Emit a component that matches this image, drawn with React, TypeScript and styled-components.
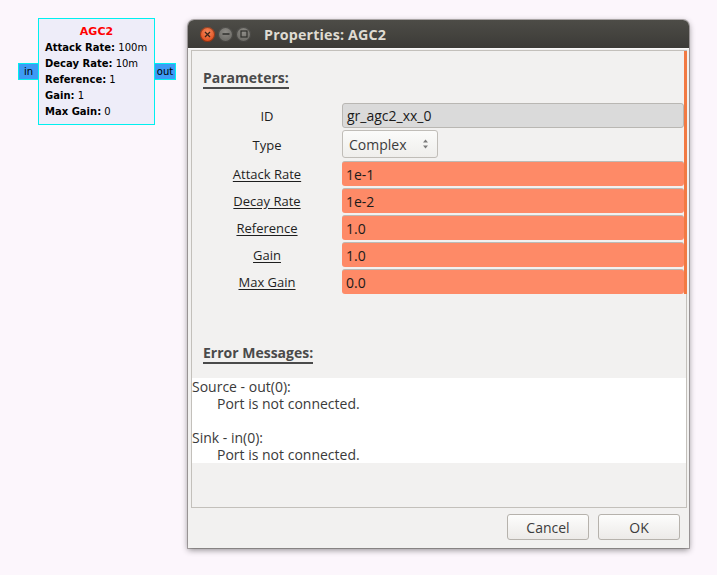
import React from "react";
import styled, { createGlobalStyle } from "styled-components";

const Global = createGlobalStyle`
  html, body { margin: 0; padding: 0; background: #fcf6fc; }
  body { width: 717px; height: 575px; overflow: hidden; }
`;

const UI = `"Open Sans", "Noto Sans", "DejaVu Sans", sans-serif`;

const Canvas = styled.div`
  position: relative;
  width: 717px;
  height: 575px;
  background: #fcf6fc;
`;

const Block = styled.div`
  position: absolute;
  left: 38px;
  top: 18px;
  width: 117px;
  height: 107px;
  box-sizing: border-box;
  border: 1px solid #00f0f0;
  background: #eeedf9;
  font-family: "DejaVu Sans", sans-serif;
  font-size: 10px;
  color: #000;
  padding: 5px 0 0 6px;
  display: flex;
  flex-direction: column;
`;

const BlockTitle = styled.div`
  color: #ff0000;
  font-weight: bold;
  font-size: 11px;
  text-align: center;
  margin-left: -6px;
  height: 16px;
  line-height: 16px;
`;

const BlockLine = styled.div`
  height: 16px;
  line-height: 16px;
  white-space: nowrap;
  b { font-weight: bold; }
`;

const Port = styled.div<{ $side: "left" | "right" }>`
  position: absolute;
  top: 44px;
  ${(p) => (p.$side === "left" ? "left: -21px; width: 19px;" : "right: -22px; width: 20px;")}
  height: 15px;
  border: 1px solid #00f0f0;
  background: #3d9bf5;
  font-family: "DejaVu Sans", sans-serif;
  font-size: 10px;
  line-height: 15px;
  text-align: center;
  color: #000;
`;

const Window = styled.div`
  position: absolute;
  left: 188px;
  top: 20px;
  width: 501px;
  height: 528px;
  border-radius: 6px 6px 0 0;
  box-shadow: 0 0 0 1px rgba(60, 55, 50, 0.35), 0 2px 6px rgba(0, 0, 0, 0.45);
  display: flex;
  flex-direction: column;
  background: #f2f1f0;
  overflow: hidden;
`;

const TitleBar = styled.div`
  height: 28px;
  background: linear-gradient(#4d4c47, #3c3b37);
  display: flex;
  align-items: center;
  padding-left: 12px;
  gap: 3px;
  flex-shrink: 0;
`;

const WinButton = styled.div<{ $kind: "close" | "min" | "max" }>`
  width: 15px;
  height: 15px;
  border-radius: 50%;
  display: flex;
  align-items: center;
  justify-content: center;
  box-shadow: inset 0 0 0 1px rgba(0, 0, 0, 0.35);
  background: ${(p) =>
    p.$kind === "close"
      ? "radial-gradient(circle at 50% 35%, #f58a5e, #e0501f 70%, #c2441b)"
      : "radial-gradient(circle at 50% 35%, #8e8c87, #6c6b66 70%, #5c5b57)"};
`;

const TitleText = styled.div`
  margin-left: 10px;
  margin-top: 1px;
  color: #dfdbd2;
  font-family: ${UI};
  font-weight: bold;
  font-size: 14.3px;
  letter-spacing: 0.15px;
`;

const Body = styled.div`
  flex: 1;
  display: flex;
  flex-direction: column;
  padding: 1px 2px 0 3px;
  border-top: 1px solid #faf9f8;
`;

const Frame = styled.div`
  position: relative;
  height: 458px;
  box-sizing: border-box;
  border: 1px solid #c3c0bb;
  display: flex;
  flex-direction: column;
  font-family: ${UI};
  color: #3c3c3c;
`;

const ScrollIndicator = styled.div`
  position: absolute;
  right: -1px;
  top: 0;
  width: 3px;
  height: 243px;
  background: #f27a43;
`;

const SectionHeader = styled.div<{ $top: number }>`
  margin: ${(p) => p.$top}px 0 0 11px;
  span {
    display: inline-block;
    font-weight: bold;
    font-size: 14px;
    line-height: 16px;
    color: #4a4a4a;
    border-bottom: 2px solid #4a4a4a;
    padding-bottom: 1px;
  }
`;

const ParamGrid = styled.div`
  margin-top: 14px;
  display: grid;
  grid-template-columns: 150px 1fr;
  grid-template-rows: 25px 29px;
  grid-auto-rows: 25px;
  row-gap: 2px;
  padding-right: 2px;
`;

const Label = styled.div<{ $ul?: boolean }>`
  display: flex;
  align-items: center;
  justify-content: center;
  font-size: 13px;
  color: #1e1e1e;
  text-decoration: ${(p) => (p.$ul ? "underline" : "none")};
  text-underline-offset: 2px;
`;

const Entry = styled.div<{ $kind: "id" | "err" }>`
  display: flex;
  align-items: center;
  padding-left: 4px;
  font-size: 14px;
  color: #1a1a1a;
  border-radius: 3px;
  ${(p) =>
    p.$kind === "id"
      ? "background: #dadada; border: 1px solid #b9b7b3;"
      : "background: #fe8a67; border-top: 1px solid #bdbab5;"}
`;

const ComboCell = styled.div`
  display: flex;
  align-items: flex-start;
`;

const Combo = styled.div`
  width: 96px;
  height: 28px;
  box-sizing: border-box;
  border: 1px solid #c0bdb8;
  border-radius: 3px;
  background: linear-gradient(#fbfbfa, #efeeec);
  display: flex;
  align-items: center;
  justify-content: space-between;
  padding: 0 8px 0 6px;
  font-size: 14px;
  color: #3c3c3c;
`;

const ErrorArea = styled.div`
  margin-top: 14px;
  background: #ffffff;
  height: 85px;
  font-size: 14px;
  line-height: 17px;
  color: #3a3a3a;
`;

const ErrLine = styled.div<{ $indent?: boolean }>`
  padding-left: ${(p) => (p.$indent ? "25px" : "0")};
  height: 17px;
  white-space: nowrap;
`;

const ButtonRow = styled.div`
  flex: 1;
  display: flex;
  justify-content: flex-end;
  align-items: flex-start;
  gap: 9px;
  padding: 6px 7px 0 0;
`;

const Button = styled.button`
  width: 82px;
  height: 26px;
  border: 1px solid #b6b2ac;
  border-radius: 3px;
  background: linear-gradient(#fdfdfc, #eceae8);
  font-family: ${UI};
  font-size: 14px;
  color: #3c3c3c;
  padding: 0;
`;

const params: { label: string; value: string }[] = [
  { label: "Attack Rate", value: "1e-1" },
  { label: "Decay Rate", value: "1e-2" },
  { label: "Reference", value: "1.0" },
  { label: "Gain", value: "1.0" },
  { label: "Max Gain", value: "0.0" },
];

export default function App() {
  return (
    <>
      <Global />
      <Canvas>
        <Block>
          <BlockTitle>AGC2</BlockTitle>
          <BlockLine><b>Attack Rate:</b> 100m</BlockLine>
          <BlockLine><b>Decay Rate:</b> 10m</BlockLine>
          <BlockLine><b>Reference:</b> 1</BlockLine>
          <BlockLine><b>Gain:</b> 1</BlockLine>
          <BlockLine><b>Max Gain:</b> 0</BlockLine>
          <Port $side="left">in</Port>
          <Port $side="right">out</Port>
        </Block>

        <Window>
          <TitleBar>
            <WinButton $kind="close">
              <svg width="7" height="7" viewBox="0 0 7 7">
                <path d="M1 1L6 6M6 1L1 6" stroke="#3a2418" strokeWidth="1.3" />
              </svg>
            </WinButton>
            <WinButton $kind="min">
              <svg width="8" height="8" viewBox="0 0 8 8">
                <path d="M0.5 4H7.5" stroke="#2f2f2c" strokeWidth="1.4" />
              </svg>
            </WinButton>
            <WinButton $kind="max">
              <svg width="8" height="8" viewBox="0 0 8 8">
                <rect x="1" y="1" width="6" height="6" fill="none" stroke="#2f2f2c" strokeWidth="1.2" />
              </svg>
            </WinButton>
            <TitleText>Properties: AGC2</TitleText>
          </TitleBar>
          <Body>
            <Frame>
              <ScrollIndicator />
              <SectionHeader $top={15}><span>Parameters:</span></SectionHeader>
              <ParamGrid>
                <Label>ID</Label>
                <Entry $kind="id">gr_agc2_xx_0</Entry>
                <Label>Type</Label>
                <ComboCell>
                  <Combo>
                    <span>Complex</span>
                    <svg width="7" height="12" viewBox="0 0 7 12">
                      <path d="M1 4.5L3.5 1.5L6 4.5Z" fill="#7a7a7a" />
                      <path d="M1 7.5L3.5 10.5L6 7.5Z" fill="#7a7a7a" />
                    </svg>
                  </Combo>
                </ComboCell>
                {params.map((p) => (
                  <React.Fragment key={p.label}>
                    <Label $ul>{p.label}</Label>
                    <Entry $kind="err">{p.value}</Entry>
                  </React.Fragment>
                ))}
              </ParamGrid>
              <SectionHeader $top={47}><span>Error Messages:</span></SectionHeader>
              <ErrorArea>
                <ErrLine>Source - out(0):</ErrLine>
                <ErrLine $indent>Port is not connected.</ErrLine>
                <ErrLine />
                <ErrLine>Sink - in(0):</ErrLine>
                <ErrLine $indent>Port is not connected.</ErrLine>
              </ErrorArea>
            </Frame>
            <ButtonRow>
              <Button>Cancel</Button>
              <Button>OK</Button>
            </ButtonRow>
          </Body>
        </Window>
      </Canvas>
    </>
  );
}
